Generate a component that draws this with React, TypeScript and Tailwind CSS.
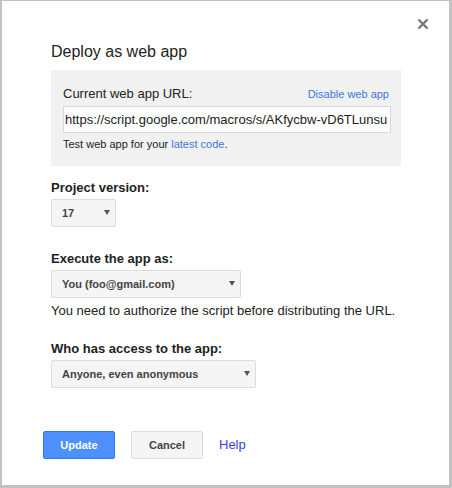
import React from 'react'

const font = { fontFamily: '"Liberation Sans", Arial, sans-serif' }

function Select({ label, width }: { label: string; width: string }) {
  return (
    <div
      className={`relative flex h-[28px] items-center rounded-[2px] border border-[#dcdcdc] bg-[#f5f5f5] pl-[10px] text-[11px] font-bold text-[#444] ${width}`}
    >
      <span>{label}</span>
      <svg
        className="absolute right-[5px] top-[10px]"
        width="6"
        height="5"
        viewBox="0 0 6 5"
      >
        <path d="M0 0 L6 0 L3 5 Z" fill="#555" />
      </svg>
    </div>
  )
}

export default function App() {
  return (
    <div
      style={font}
      className="box-border h-[488px] w-[452px] border-t border-l-2 border-r-[3px] border-b-[3px] border-[#c2c2c2] bg-white text-[#222]"
    >
      <div className="relative pl-[49px] pt-[41px]">
        {/* Close */}
        <svg
          className="absolute right-[20px] top-[17px]"
          width="12"
          height="12"
          viewBox="0 0 12 12"
        >
          <path d="M1.5 1.5 L10.5 10.5 M10.5 1.5 L1.5 10.5" stroke="#777" strokeWidth="2.4" />
        </svg>

        <h1 className="text-[16px] leading-[20px]">Deploy as web app</h1>

        {/* URL box */}
        <div className="mt-[8px] w-[350px] bg-[#f1f1f1] pl-[12px] pr-[10px] pt-[16px] pb-[15px]">
          <div className="flex items-center justify-between pr-[2px]">
            <span className="text-[13px] leading-[16px]">Current web app URL:</span>
            <a className="text-[11px] leading-[14px] text-[#3d77d6]">Disable web app</a>
          </div>
          <div className="mt-[4px] flex h-[27px] items-center overflow-hidden whitespace-nowrap border border-[#d9d9d9] bg-white pl-[1px] text-[13px]">
            https://script.google.com/macros/s/AKfycbw-vD6TLunsu
          </div>
          <p className="mt-[4px] text-[11px] leading-[14px]">
            Test web app for your <a className="text-[#3d77d6]">latest code</a>.
          </p>
        </div>

        <div className="mt-[13px] text-[13px] font-bold leading-[17px]">Project version:</div>
        <div className="mt-[3px]">
          <Select label="17" width="w-[65px]" />
        </div>

        <div className="mt-[23px] text-[13px] font-bold leading-[17px]">Execute the app as:</div>
        <div className="mt-[3px]">
          <Select label="You (foo@gmail.com)" width="w-[190px]" />
        </div>
        <p className="mt-[4px] text-[13px] leading-[17px]">
          You need to authorize the script before distributing the URL.
        </p>

        <div className="mt-[21px] text-[13px] font-bold leading-[17px]">Who has access to the app:</div>
        <div className="mt-[3px]">
          <Select label="Anyone, even anonymous" width="w-[205px]" />
        </div>

        {/* Buttons */}
        <div className="-ml-[8px] mt-[43px] flex items-center gap-[16px]">
          <button className="h-[28px] w-[72px] rounded-[2px] border border-[#3079ed] bg-[#4d90fe] text-[11px] font-bold text-white">
            Update
          </button>
          <button className="h-[28px] w-[72px] rounded-[2px] border border-[#dcdcdc] bg-[#f5f5f5] text-[11px] font-bold text-[#444]">
            Cancel
          </button>
          <a className="text-[13px] text-[#4040d8]">Help</a>
        </div>
      </div>
    </div>
  )
}
